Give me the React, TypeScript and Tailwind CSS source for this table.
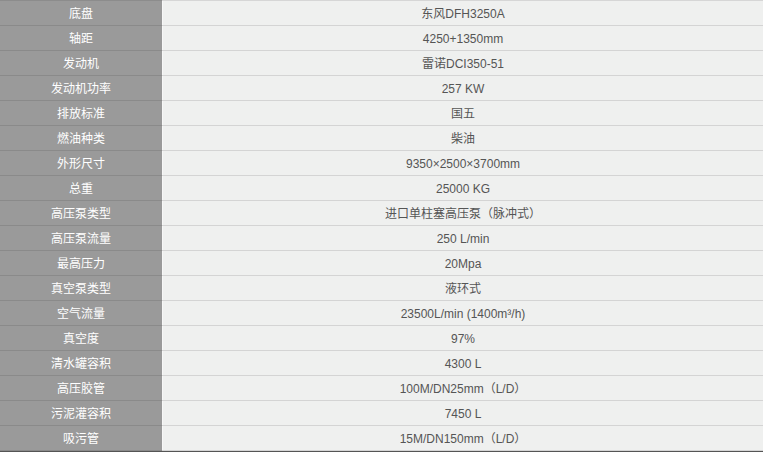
import React from 'react'

const rows: [string, string][] = [
  ['底盘', '东风DFH3250A'],
  ['轴距', '4250+1350mm'],
  ['发动机', '雷诺DCI350-51'],
  ['发动机功率', '257 KW'],
  ['排放标准', '国五'],
  ['燃油种类', '柴油'],
  ['外形尺寸', '9350×2500×3700mm'],
  ['总重', '25000 KG'],
  ['高压泵类型', '进口单柱塞高压泵（脉冲式）'],
  ['高压泵流量', '250 L/min'],
  ['最高压力', '20Mpa'],
  ['真空泵类型', '液环式'],
  ['空气流量', '23500L/min (1400m³/h)'],
  ['真空度', '97%'],
  ['清水罐容积', '4300 L'],
  ['高压胶管', '100M/DN25mm（L/D）'],
  ['污泥灌容积', '7450 L'],
  ['吸污管', '15M/DN150mm（L/D）'],
]

export default function App() {
  return (
    <div
      className="w-[763px] h-[452px] bg-[#eff0ef] text-[12px] overflow-hidden"
      style={{ fontFamily: '"Liberation Sans", "Noto Sans CJK SC", sans-serif' }}
    >
      <div className="flex h-px">
        <div className="w-[162px] bg-[#8c8c8c]" />
        <div className="flex-1 bg-[#d6d6d6]" />
      </div>
      {rows.map(([k, v]) => (
        <div key={k} className="flex h-[25px]">
          <div className="w-[162px] bg-[#9a9a9a] border-b border-[#8a8a8a] text-white flex items-center justify-center pt-[2px]">
            {k}
          </div>
          <div className="w-px bg-[#f7f7f7] border-b border-[#d4d4d4]" />
          <div className="flex-1 border-b border-[#d4d4d4] text-[#555] flex items-center justify-center pt-[2px]">
            {v}
          </div>
        </div>
      ))}
      <div className="h-px bg-[#555]" />
    </div>
  )
}
